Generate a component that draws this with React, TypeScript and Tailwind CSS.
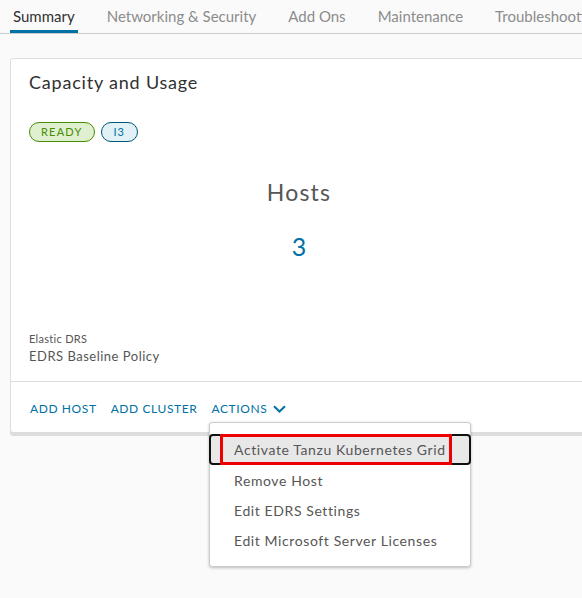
import React from "react";

const font = { fontFamily: "Lato, 'Open Sans', sans-serif" };

export default function App() {
  const tabs = ["Summary", "Networking & Security", "Add Ons", "Maintenance", "Troubleshooting"];
  return (
    <div className="relative w-[582px] h-[598px] overflow-hidden bg-[#fafafa]" style={font}>
      <div className="flex h-[34px] border-b border-[#cccccc] pl-[10px] gap-[26px] whitespace-nowrap">
        {tabs.map((t, i) => (
          <div
            key={t}
            className={
              "px-[3px] text-[15px] leading-[32px] " +
              (i === 0 ? "text-[#313131] border-b-[3px] border-[#0072a3]" : "text-[#8c8c8c]")
            }
          >
            {t}
          </div>
        ))}
      </div>
      <div className="ml-[10px] mt-[24px] w-[578px] bg-white border border-[#dddddd] rounded-[3px] shadow-[0_3px_0_#dddddd]">
        <div className="px-[18px] pt-[11px]">
          <div className="text-[18px] leading-[24px] tracking-[0.8px] text-[#313131]">Capacity and Usage</div>
          <div className="flex gap-[6px] mt-[28px]">
            <span className="h-[20px] px-[11px] rounded-full border border-[#498b00] bg-[#dff0d0] text-[#498b00] text-[11px] leading-[18px] tracking-[1.2px]">READY</span>
            <span className="h-[20px] px-[12px] rounded-full border border-[#00567a] bg-[#e1f1f6] text-[#0072a3] text-[11px] leading-[18px] tracking-[1px]">I3</span>
          </div>
          <div className="text-center mt-[36px] text-[23px] leading-[28px] tracking-[1.2px] text-[#565656]">Hosts</div>
          <div className="text-center mt-[25px] text-[25px] leading-[30px] text-[#0072a3]">3</div>
          <div className="mt-[71px] text-[11px] leading-[14px] tracking-[0.3px] text-[#565656]">Elastic DRS</div>
          <div className="mt-[1px] text-[13px] leading-[18px] tracking-[0.5px] text-[#565656] pb-[16px]">EDRS Baseline Policy</div>
        </div>
        <div className="border-t border-[#dddddd] h-[51px] flex items-center gap-[14px] px-[19px] pt-[3px] text-[12px] tracking-[0.6px] text-[#0072a3]">
          <span>ADD HOST</span>
          <span>ADD CLUSTER</span>
          <span className="flex items-center gap-[6px]">
            ACTIONS
            <svg width="13" height="8" viewBox="0 0 13 8" fill="none">
              <path d="M1 1.2 L6.5 6.5 L12 1.2" stroke="#0072a3" strokeWidth="2" />
            </svg>
          </span>
        </div>
      </div>
      <div className="absolute left-[209px] top-[422px] w-[262px] h-[145px] bg-white border border-[#cccccc] rounded-[3px] shadow-[0_1px_3px_rgba(0,0,0,0.25)] pt-[11px]">
        <div className="relative h-[31px] -mx-px rounded-[4px] border-2 border-[#111111] bg-[#e8e8e8] flex items-center pl-[23px] text-[14px] tracking-[0.6px] text-[#565656]">
          Activate Tanzu Kubernetes Grid
          <div className="absolute left-[9px] top-[-2px] w-[232px] h-[31px] border-[3px] border-[#ee0000]" />
        </div>
        {["Remove Host", "Edit EDRS Settings", "Edit Microsoft Server Licenses"].map((t) => (
          <div key={t} className="h-[30px] flex items-center pl-[24px] text-[14px] tracking-[0.6px] text-[#565656]">
            {t}
          </div>
        ))}
      </div>
    </div>
  );
}
